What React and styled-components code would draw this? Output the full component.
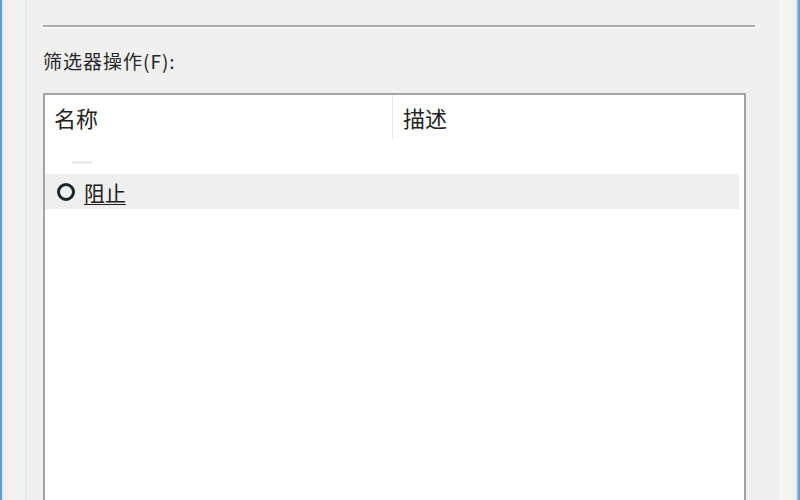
import styled, { createGlobalStyle } from "styled-components";

const Global = createGlobalStyle`
  html, body {
    margin: 0;
    padding: 0;
    width: 800px;
    height: 500px;
    overflow: hidden;
    background: #f0f0f0;
  }
`;

const Window = styled.div`
  display: flex;
  width: 800px;
  height: 500px;
  font-family: "Noto Sans CJK SC", "Liberation Sans", sans-serif;
  color: #1e1e1e;
`;

// window frame on the sides: blue outer border and pale glass stripes
const Frame = styled.div`
  flex: 0 0 ${(p) => p.$width}px;
  background: ${(p) =>
    p.$side === "left"
      ? "linear-gradient(to right, #5f9ccf 0, #5f9ccf 2px, #dce9f3 2px, #f6eeee 6px, #f4f1ec 12px, #eef3f6 18px, #f3f3f0 24px, #e6e6e6 26px, #f0f0f0 27px)"
      : "linear-gradient(to right, #f0f0f0 0, #fbfbfb 1px, #f3f3f3 3px, #f6f4ec 6px, #eef4f6 12px, #f2f2ee 16px, #b8d2e4 17px, #5f9ccf 19px, #5f9ccf 20px)"};
`;

const Panel = styled.div`
  flex: 1;
  display: flex;
  flex-direction: column;
  padding: 25px 25px 0 16px;
  min-width: 0;
`;

const Separator = styled.div`
  height: 2px;
  background: #ababab;
  border-bottom: 1px solid #ffffff;
`;

const Label = styled.div`
  margin-top: 20px;
  font-size: 19px;
  line-height: 26px;
  letter-spacing: 1px;
  color: #262626;
`;

const ListBox = styled.div`
  flex: 1;
  margin-top: 19px;
  margin-right: 9px;
  background: #ffffff;
  border: 2px solid #a3a3a3;
  border-bottom: none;
  display: flex;
  flex-direction: column;
`;

const Header = styled.div`
  display: grid;
  grid-template-columns: 348px 1fr;
  height: 44px;
`;

const HeaderCell = styled.div`
  display: flex;
  align-items: center;
  padding-left: ${(p) => p.$pad}px;
  font-size: 22px;
  color: #222;
  border-right: ${(p) => (p.$divider ? "1px solid #e6e6e6" : "none")};
`;

const GroupGap = styled.div`
  height: 35px;
  position: relative;
`;

const GroupMark = styled.div`
  position: absolute;
  left: 27px;
  top: 22px;
  width: 20px;
  height: 3px;
  background: #ececec;
`;

const Row = styled.div`
  display: flex;
  align-items: center;
  gap: 9px;
  height: 35px;
  margin-right: 5px;
  padding-left: 12px;
  background: #efefef;
`;

const Radio = styled.span`
  box-sizing: border-box;
  width: 18px;
  height: 18px;
  border-radius: 50%;
  border: 3px solid #17262e;
`;

const LinkText = styled.span`
  font-size: 21px;
  color: #202020;
  text-decoration: underline;
  text-underline-offset: 3px;
  text-decoration-thickness: 1px;
`;

export default function App() {
  return (
    <>
      <Global />
      <Window>
        <Frame $side="left" $width={27} />
        <Panel>
          <Separator />
          <Label>筛选器操作(F):</Label>
          <ListBox>
            <Header>
              <HeaderCell $pad={9} $divider>
                名称
              </HeaderCell>
              <HeaderCell $pad={10}>描述</HeaderCell>
            </Header>
            <GroupGap>
              <GroupMark />
            </GroupGap>
            <Row>
              <Radio />
              <LinkText>阻止</LinkText>
            </Row>
          </ListBox>
        </Panel>
        <Frame $side="right" $width={20} />
      </Window>
    </>
  );
}
